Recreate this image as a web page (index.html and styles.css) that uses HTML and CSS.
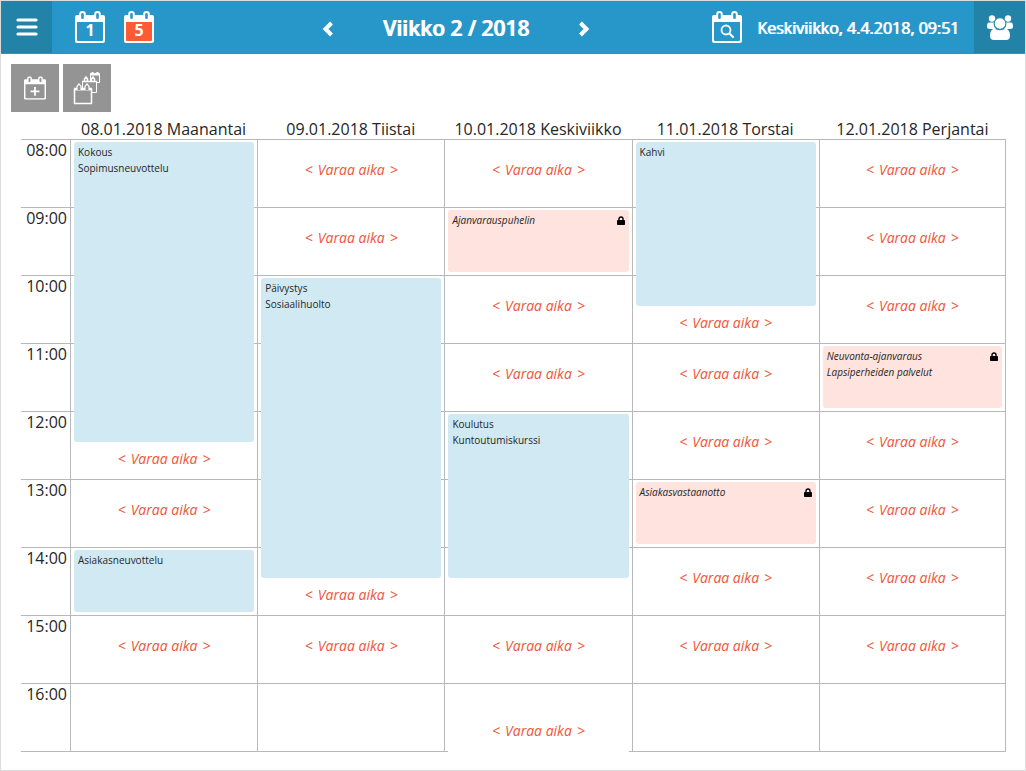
FILE: index.html
```html
<!DOCTYPE html>
<html lang="fi">
  <head>
    <meta charset="utf-8">
    <title>Viikko 2 / 2018</title>
    <meta name="viewport" content="width=device-width, initial-scale=1">
    <link rel="stylesheet" href="styles.css">
  </head>
  <body>
    <!-- shared icons -->
    <svg class="defs" width="0" height="0" aria-hidden="true">
      <symbol id="calendar" viewBox="0 0 30 32">
        <rect class="page" x="1" y="9" width="28" height="22"/>
        <path d="M2 4h26a2 2 0 0 1 2 2v24a2 2 0 0 1-2 2H2a2 2 0 0 1-2-2V6a2 2 0 0 1 2-2zm0 7v18q0 1 1 1h24q1 0 1-1V11z" fill="#fff" fill-rule="evenodd"/>
        <rect class="ring" x="5.200" y="1" width="4.600" height="8" rx="2.300"/>
        <rect class="ring" x="20.200" y="1" width="4.600" height="8" rx="2.300"/>
      </symbol>
      <symbol id="lock" viewBox="0 0 8 9">
        <path d="M2 5V3a2 2 0 0 1 4 0v2" fill="none" stroke="#000" stroke-width="1.4"/>
        <rect y="4" width="8" height="5" rx=".8"/>
      </symbol>
    </svg>

    <header>
      <button class="side" aria-label="Valikko">
        <svg width="22" height="18" viewBox="0 0 22 18"><path d="M2 2h18M2 9h18M2 16h18" stroke="#fff" stroke-width="3.2" stroke-linecap="round"/></svg>
      </button>
      <div class="views">
        <button aria-label="Päivä">
          <svg width="30" height="32"><use href="#calendar"/><text x="15" y="25">1</text></svg>
        </button>
        <button class="active" aria-label="Viikko">
          <svg width="30" height="32"><use href="#calendar"/><text x="15" y="25">5</text></svg>
        </button>
      </div>
      <nav>
        <button aria-label="Edellinen viikko">
          <svg width="12" height="16" viewBox="0 0 12 16"><path d="M9.500 2L3.500 8l6 6" fill="none" stroke="#fff" stroke-width="4"/></svg>
        </button>
        <h1>Viikko 2 / 2018</h1>
        <button aria-label="Seuraava viikko">
          <svg width="12" height="16" viewBox="0 0 12 16"><path d="M2.500 2l6 6-6 6" fill="none" stroke="#fff" stroke-width="4"/></svg>
        </button>
      </nav>
      <button aria-label="Etsi päivä">
        <svg width="30" height="32">
          <use href="#calendar"/>
          <circle cx="14" cy="19" r="4.500" fill="none" stroke="#fff" stroke-width="1.800"/>
          <path d="M17.500 22.500l3.500 3.500" stroke="#fff" stroke-width="2.200" stroke-linecap="round"/>
        </svg>
      </button>
      <time datetime="2018-04-04T09:51">Keskiviikko, 4.4.2018, 09:51</time>
      <button class="side" aria-label="Käyttäjät">
        <svg width="26" height="25" viewBox="0 0 26 25" fill="#fff">
          <circle cx="5" cy="3.500" r="3.200"/>
          <circle cx="21" cy="3.500" r="3.200"/>
          <path d="M2 7.500h5q-1 3.500 2 6.500H3q-3 0-3-2.500 0-4 2-4zM24 7.500h-5q1 3.500-2 6.500h6q3 0 3-2.500 0-4-2-4z"/>
          <circle cx="13" cy="8.500" r="5.800" stroke="#2282a8"/>
          <path d="M7 13.500q6 3.500 12 0 4 1.500 4 7 0 4.500-4 4.500H7q-4 0-4-4.500 0-5.500 4-7z"/>
        </svg>
      </button>
    </header>

    <div class="toolbar">
      <button aria-label="Lisää varaus">
        <svg width="22" height="24" viewBox="0 0 30 32"><use href="#calendar"/><path d="M15 14.500v12M9 20.500h12" stroke="#fff" stroke-width="2.400"/></svg>
      </button>
      <button aria-label="Lisää useita varauksia">
        <svg width="28" height="34" viewBox="0 0 28 34" stroke="#fff" fill="#949494">
          <path d="M17.500 2.500h9v9h-9z"/>
          <path d="M17 3.500h10M19.500 1v3M24.500 1v3" stroke-width="2"/>
          <path d="M9.500 10.500h14v11h-14z"/>
          <path d="M9 10.500h15M11.500 11V8L13 6l1.500 2v3M18.500 11V8L20 6l1.500 2v3" stroke-width="1.500"/>
          <path d="M1.500 18.500h17v14h-17z" stroke-width="1.500"/>
          <path d="M1 18h18" stroke-width="2.500"/>
          <path d="M4 19v-3.500L6 13l2 2.500V19M12 19v-3.500l2-2.500 2 2.500V19" stroke-width="1.200"/>
        </svg>
      </button>
    </div>

    <main>
      <table>
        <thead>
          <tr>
            <td class="corner"></td>
            <th scope="col">08.01.2018 Maanantai</th>
            <th scope="col">09.01.2018 Tiistai</th>
            <th scope="col">10.01.2018 Keskiviikko</th>
            <th scope="col">11.01.2018 Torstai</th>
            <th scope="col">12.01.2018 Perjantai</th>
          </tr>
        </thead>
        <tbody>
          <tr>
            <th scope="row">08:00</th>
            <td><div class="event" style="--hours: 4.5">Kokous<br>Sopimusneuvottelu</div></td>
            <td><button class="slot">&lt; <span>Varaa aika</span> &gt;</button></td>
            <td><button class="slot">&lt; <span>Varaa aika</span> &gt;</button></td>
            <td><div class="event" style="--hours: 2.5">Kahvi</div></td>
            <td><button class="slot">&lt; <span>Varaa aika</span> &gt;</button></td>
          </tr>
          <tr>
            <th scope="row">09:00</th>
            <td></td>
            <td><button class="slot">&lt; <span>Varaa aika</span> &gt;</button></td>
            <td><div class="event locked" style="--hours: 1">Ajanvarauspuhelin<svg class="lock"><use href="#lock"/></svg></div></td>
            <td></td>
            <td><button class="slot">&lt; <span>Varaa aika</span> &gt;</button></td>
          </tr>
          <tr>
            <th scope="row">10:00</th>
            <td></td>
            <td><div class="event" style="--hours: 4.5">Päivystys<br>Sosiaalihuolto</div></td>
            <td><button class="slot">&lt; <span>Varaa aika</span> &gt;</button></td>
            <td><button class="slot half">&lt; <span>Varaa aika</span> &gt;</button></td>
            <td><button class="slot">&lt; <span>Varaa aika</span> &gt;</button></td>
          </tr>
          <tr>
            <th scope="row">11:00</th>
            <td></td>
            <td></td>
            <td><button class="slot">&lt; <span>Varaa aika</span> &gt;</button></td>
            <td><button class="slot">&lt; <span>Varaa aika</span> &gt;</button></td>
            <td><div class="event locked" style="--hours: 1">Neuvonta-ajanvaraus<br>Lapsiperheiden palvelut<svg class="lock"><use href="#lock"/></svg></div></td>
          </tr>
          <tr>
            <th scope="row">12:00</th>
            <td><button class="slot half">&lt; <span>Varaa aika</span> &gt;</button></td>
            <td></td>
            <td><div class="event" style="--hours: 2.5">Koulutus<br>Kuntoutumiskurssi</div></td>
            <td><button class="slot">&lt; <span>Varaa aika</span> &gt;</button></td>
            <td><button class="slot">&lt; <span>Varaa aika</span> &gt;</button></td>
          </tr>
          <tr>
            <th scope="row">13:00</th>
            <td><button class="slot">&lt; <span>Varaa aika</span> &gt;</button></td>
            <td></td>
            <td></td>
            <td><div class="event locked" style="--hours: 1">Asiakasvastaanotto<svg class="lock"><use href="#lock"/></svg></div></td>
            <td><button class="slot">&lt; <span>Varaa aika</span> &gt;</button></td>
          </tr>
          <tr>
            <th scope="row">14:00</th>
            <td><div class="event" style="--hours: 1">Asiakasneuvottelu</div></td>
            <td><button class="slot half">&lt; <span>Varaa aika</span> &gt;</button></td>
            <td></td>
            <td><button class="slot">&lt; <span>Varaa aika</span> &gt;</button></td>
            <td><button class="slot">&lt; <span>Varaa aika</span> &gt;</button></td>
          </tr>
          <tr>
            <th scope="row">15:00</th>
            <td><button class="slot">&lt; <span>Varaa aika</span> &gt;</button></td>
            <td><button class="slot">&lt; <span>Varaa aika</span> &gt;</button></td>
            <td><button class="slot">&lt; <span>Varaa aika</span> &gt;</button></td>
            <td><button class="slot">&lt; <span>Varaa aika</span> &gt;</button></td>
            <td><button class="slot">&lt; <span>Varaa aika</span> &gt;</button></td>
          </tr>
          <tr>
            <th scope="row">16:00</th>
            <td></td>
            <td></td>
            <td><button class="slot half last">&lt; <span>Varaa aika</span> &gt;</button></td>
            <td></td>
            <td></td>
          </tr>
        </tbody>
      </table>
    </main>
  </body>
</html>
```

FILE: styles.css
```css
* {
  box-sizing: border-box;
}
body {
  --bar: #2796c8;
  --bar-dark: #2282a8;
  --line: #b8b8b8;
  min-height: 100vh;
  margin: 0;
  border: 1px solid #dcdcdc;
  background: #fff;
  color: #262626;
  font-family: "Open Sans", sans-serif;
  font-size: 16px;
}
button {
  display: flex;
  align-items: center;
  justify-content: center;
  padding: 0;
  border: 0;
  background: none;
  color: inherit;
  font: inherit;
  cursor: pointer;
}
.defs {
  position: absolute;
}
.page {
  fill: var(--page, none);
}
.ring {
  fill: var(--ring, #2796c8);
  stroke: #fff;
  stroke-width: 2px;
}

/* top bar */
header {
  display: flex;
  align-items: center;
  height: 53px;
  border-bottom: 1px solid #4d89a5;
  background: var(--bar);
  color: #fff;
}
.side {
  width: 51px;
  height: 52px;
  background: var(--bar-dark);
}
.views {
  display: flex;
  gap: 19px;
  margin-left: 23px;
}
.active {
  --page: #ff5a36;
}
.views text {
  fill: #fff;
  font-size: 16px;
  font-weight: 700;
  text-anchor: middle;
}
nav {
  display: flex;
  flex: 1;
  align-items: center;
  justify-content: center;
  gap: 49px;
  margin-left: 46px;
}
nav button {
  padding-top: 4px;
}
h1,
time {
  padding-top: 2px;
  text-shadow: 1px 0 currentColor;
  white-space: nowrap;
}
h1 {
  margin: 0;
  font-size: 21px;
  font-weight: 600;
  line-height: 30px;
}
time {
  margin: 0 15px;
}

/* actions */
.toolbar {
  --ring: #949494;
  display: flex;
  gap: 4px;
  padding: 10px 10px 0;
}
.toolbar button {
  width: 48px;
  height: 48px;
  background: #949494;
}

/* week */
main {
  padding: 7px 19px 18px 20px;
}
table {
  width: 100%;
  border-spacing: 0;
  table-layout: fixed;
}
th {
  padding: 0;
  font-weight: 400;
  line-height: 20px;
  white-space: nowrap;
}
.corner {
  width: 49px;
  padding: 0;
}
tbody th {
  height: 68px;
  padding-right: 3px;
  border-top: 1px solid var(--line);
  text-align: right;
  vertical-align: top;
}
tbody td {
  position: relative;
  height: 68px;
  padding: 0;
  border-top: 1px solid var(--line);
  border-left: 1px solid var(--line);
  vertical-align: top;
}
tbody td:last-child {
  border-right: 1px solid var(--line);
}
tbody tr:last-child > * {
  height: 69px;
  border-bottom: 1px solid var(--line);
}
.event {
  position: absolute;
  z-index: 1;
  top: 2px;
  left: 3px;
  right: 3px;
  height: calc(var(--hours) * 68px - 6px);
  padding: 2px 4px;
  border-radius: 3px;
  background: #d1e9f2;
  font-size: 10px;
  line-height: 16px;
}
.locked {
  background: #fee3de;
  font-style: italic;
}
.lock {
  position: absolute;
  top: 6px;
  right: 4px;
  width: 8px;
  height: 9px;
}
.slot {
  gap: 5px;
  width: 100%;
  height: 58px;
  color: #f0553a;
  font-size: 14px;
  font-style: italic;
}
.half {
  height: 26px;
  margin-top: 33px;
}
/* runs past the end of the day */
.last {
  width: calc(100% - 6px);
  height: 35px;
  margin: 33px 3px -1px;
  padding-bottom: 9px;
  background: #fff;
}
```
